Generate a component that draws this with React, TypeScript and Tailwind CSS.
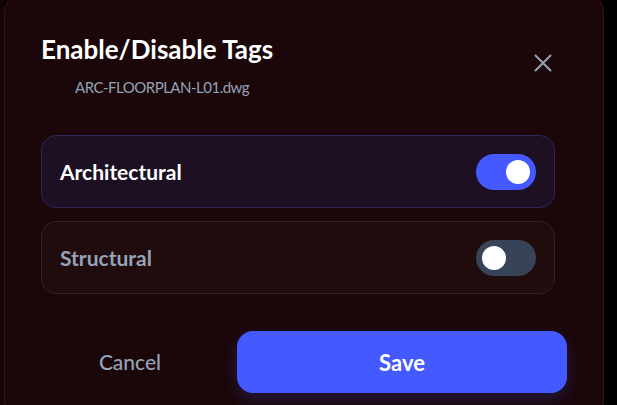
import React, { useState } from "react";

function Toggle({ on, onClick }: { on: boolean; onClick: () => void }) {
  return (
    <button
      onClick={onClick}
      className={`relative w-[60px] h-[36px] rounded-full shrink-0 ${on ? "bg-[#4459ff]" : "bg-[#374357]"}`}
    >
      <span
        className={`absolute top-[6px] w-[24px] h-[24px] rounded-full bg-white ${on ? "left-[30px]" : "left-[6px]"}`}
      />
    </button>
  );
}

export default function App() {
  const [arch, setArch] = useState(true);
  const [struct, setStruct] = useState(false);
  return (
    <div
      className="w-full h-[405px] overflow-hidden bg-black flex"
      style={{ fontFamily: 'Lato, "Open Sans", sans-serif' }}
    >
      <div className="w-[4px] shrink-0 bg-[#13060a]" />
      <div className="w-[600px] shrink-0 h-[430px] -mt-[8px] rounded-[20px] border border-[#3a1317] bg-[#1b0709] pl-[36px] pr-[36px] flex flex-col">
        <div className="flex items-start justify-between pt-[39px]">
          <div>
            <h1 className="text-[26px] leading-[34px] font-bold text-white">Enable/Disable Tags</h1>
            <p className="ml-[34px] mt-[11px] text-[15px] leading-[20px] text-[#94a3b8] tracking-[-0.5px]">ARC-FLOORPLAN-L01.dwg</p>
          </div>
          <button className="mt-[22px] mr-[15px] text-[#94a3b8]" aria-label="Close">
            <svg width="18" height="18" viewBox="0 0 18 18" fill="none" stroke="currentColor" strokeWidth="2" strokeLinecap="round">
              <path d="M1.5 1.5 L16.5 16.5 M16.5 1.5 L1.5 16.5" />
            </svg>
          </button>
        </div>

        <div className="mt-[38px] mr-[12px] flex flex-col gap-[13px]">
          <div className="h-[73px] rounded-[15px] border border-[#2c295a] bg-[#1c1022] flex items-center justify-between pl-[18px] pr-[18px]">
            <span className="text-[21px] font-bold text-white">Architectural</span>
            <Toggle on={arch} onClick={() => setArch(!arch)} />
          </div>
          <div className="h-[73px] rounded-[15px] border border-[#34202a] bg-[#200b0d] flex items-center justify-between pl-[18px] pr-[18px]">
            <span className="text-[21px] font-bold text-[#94a3b8]">Structural</span>
            <Toggle on={struct} onClick={() => setStruct(!struct)} />
          </div>
        </div>

        <div className="mt-[37px] flex gap-[18px]">
          <button className="w-[178px] h-[62px] text-[21px] font-medium text-[#94a3b8]">Cancel</button>
          <button className="flex-1 h-[62px] rounded-[16px] bg-[#4459ff] text-white text-[22px] font-bold shadow-[0_6px_16px_rgba(68,89,255,0.22)]">
            Save
          </button>
        </div>
      </div>
    </div>
  );
}
